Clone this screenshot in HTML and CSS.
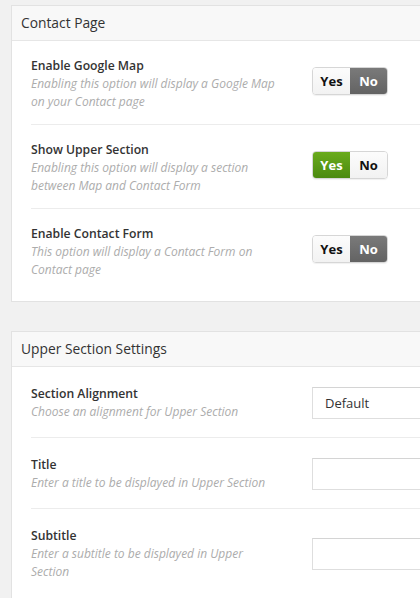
FILE: index.html
```html
<!DOCTYPE html>
<html>
<head>
<meta charset="utf-8">
<link rel="stylesheet" href="styles.css">
</head>
<body>
<div class="panel">
  <div class="panel-head">Contact Page</div>
  <div class="row">
    <div class="info">
      <div class="label">Enable Google Map</div>
      <div class="desc">Enabling this option will display a Google Map on your Contact page</div>
    </div>
    <div class="control toggle-wrap">
      <div class="toggle"><span class="seg yes">Yes</span><span class="seg no on-off">No</span></div>
    </div>
  </div>
  <div class="row">
    <div class="info">
      <div class="label">Show Upper Section</div>
      <div class="desc">Enabling this option will display a section between Map and Contact Form</div>
    </div>
    <div class="control toggle-wrap">
      <div class="toggle"><span class="seg yes on-yes">Yes</span><span class="seg no">No</span></div>
    </div>
  </div>
  <div class="row last">
    <div class="info">
      <div class="label">Enable Contact Form</div>
      <div class="desc">This option will display a Contact Form on Contact page</div>
    </div>
    <div class="control toggle-wrap">
      <div class="toggle"><span class="seg yes">Yes</span><span class="seg no on-off">No</span></div>
    </div>
  </div>
</div>

<div class="panel second">
  <div class="panel-head">Upper Section Settings</div>
  <div class="row row2">
    <div class="info">
      <div class="label">Section Alignment</div>
      <div class="desc">Choose an alignment for Upper Section</div>
    </div>
    <div class="control field-wrap">
      <div class="field select">Default</div>
    </div>
  </div>
  <div class="row row2">
    <div class="info">
      <div class="label">Title</div>
      <div class="desc">Enter a title to be displayed in Upper Section</div>
    </div>
    <div class="control field-wrap">
      <div class="field"></div>
    </div>
  </div>
  <div class="row row2 last">
    <div class="info">
      <div class="label">Subtitle</div>
      <div class="desc">Enter a subtitle to be displayed in Upper Section</div>
    </div>
    <div class="control field-wrap">
      <div class="field"></div>
    </div>
  </div>
</div>
</body>
</html>
```

FILE: styles.css
```css
html, body {
  margin: 0;
  padding: 0;
  overflow: hidden;
  background: #f1f1f1;
  font-family: "Open Sans", "Noto Sans", sans-serif;
  color: #333;
}

.panel {
  margin: 5px 0 0 11px;
  width: 460px;
  background: #fff;
  border: 1px solid #e2e2e2;
}

.panel.second {
  margin-top: 29px;
}

.panel-head {
  height: 34px;
  line-height: 34px;
  padding: 0 9px;
  background: #f8f8f8;
  border-bottom: 1px solid #e6e6e6;
  font-size: 13.8px;
  color: #333;
}

.row {
  display: flex;
  align-items: center;
  margin: 0 20px 0 19px;
  padding: 16px 0 13px;
  border-bottom: 1px solid #ececec;
}

.row.last {
  border-bottom: none;
  padding-bottom: 22px;
}

.row2 {
  padding: 18px 0 16px;
}

.info {
  width: 249px;
  flex: none;
}

.label {
  font-size: 12.2px;
  font-weight: 600;
  line-height: 18px;
  color: #333;
}

.desc {
  font-size: 12px;
  font-style: italic;
  line-height: 18px;
  color: #acacac;
}

.control {
  margin-left: 32px;
}

.toggle-wrap {
  margin-bottom: 6px;
}

.toggle {
  display: flex;
  height: 26px;
  border: 1px solid #d6d6d6;
  border-radius: 4px;
  overflow: hidden;
  box-shadow: 0 1px 1px rgba(0,0,0,0.06);
}

.seg {
  display: flex;
  align-items: center;
  justify-content: center;
  font-size: 13px;
  font-weight: 700;
  color: #111;
  background: linear-gradient(#fcfcfc, #f2f2f2);
}

.seg.yes {
  width: 37px;
}

.seg.no {
  width: 37px;
}

.seg.on-off {
  background: linear-gradient(#7a7a7a, #636363);
  color: #fff;
}

.seg.on-yes {
  background: linear-gradient(#6aab1d, #4b8a10);
  color: #fff;
}

.field {
  width: 200px;
  height: 30px;
  line-height: 30px;
  border: 1px solid #dedede;
  border-top-color: #d4d4d4;
  background: #fff;
  box-sizing: content-box;
  padding: 0 12px;
  font-size: 13px;
  color: #333;
}
```
